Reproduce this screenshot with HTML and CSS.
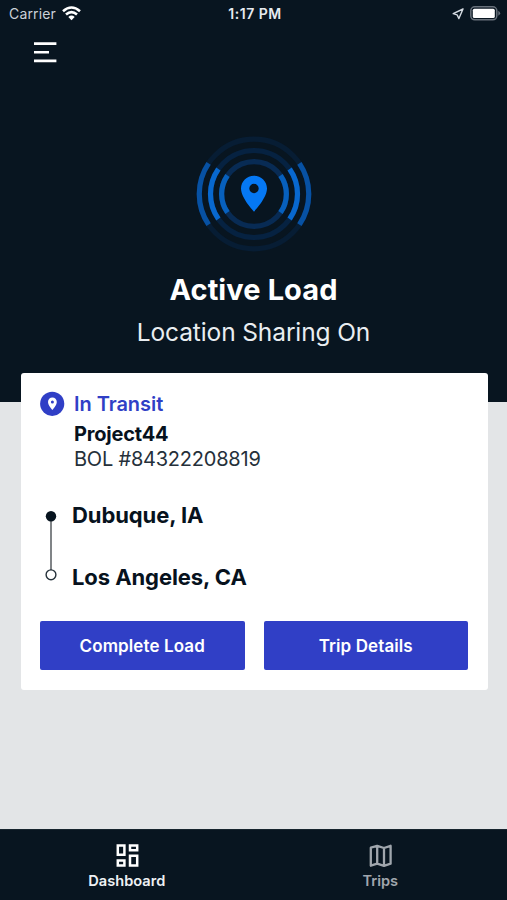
FILE: index.html
```html
<!DOCTYPE html>
<html lang="en">
<head>
<meta charset="utf-8">
<title>Active Load</title>
<link rel="stylesheet" href="styles.css">
</head>
<body>
<div class="app">
  <header class="hero">
    <div class="status">
      <div class="carrier"><span>Carrier</span>
        <svg class="wifi" width="19" height="15" viewBox="0 0 19 15" fill="none" stroke="#fff" stroke-width="2.6"><path d="M1 5.2Q9.5-2.2 18 5.2M4 8.5Q9.5 3.6 15 8.5"/><path d="M6.3 10.9Q9.5 8.2 12.7 10.9L9.5 14.2Z" fill="#fff" stroke="none"/></svg>
      </div>
      <div class="time">1:17 PM</div>
      <div class="indicators">
        <svg width="12" height="12" viewBox="0 0 12 12" fill="none" stroke="#d5dbe2" stroke-width="1.4" stroke-linejoin="round"><path d="M11 1 1.2 5.7 5.1 6.8 6.9 10.6Z"/></svg>
        <svg width="31" height="15" viewBox="0 0 31 15"><rect x=".8" y=".8" width="26" height="13" rx="4" fill="none" stroke="#68717b" stroke-width="1.5"/><rect x="2.8" y="2.7" width="22" height="9.4" rx="1.6" fill="#fff"/><path d="M28.3 4.8Q32 7.3 28.3 9.8Z" fill="#68717b"/></svg>
      </div>
    </div>
    <svg class="menu" width="24" height="22" viewBox="0 0 24 22" fill="none" stroke="#fff" stroke-width="2.6"><path d="M0 2.6H22.4M0 11.2H15M0 19.9H22.4"/></svg>
    <svg class="radar" width="120" height="120" viewBox="-60 -60 120 120" fill="none" stroke-width="5.2">
      <g stroke="#062241"><circle r="54.8" stroke="#071d34"/><circle r="43.5"/><circle r="32.4" stroke="#082b54"/></g>
      <path stroke="#0751a3" d="M-45.4-30.6A54.8 54.8 0 0 0-45.4 30.6M45.4-30.6A54.8 54.8 0 0 1 45.4 30.6"/>
      <path stroke="#0868cf" d="M-35.6-25A43.5 43.5 0 0 0-35.6 25M35.6-25A43.5 43.5 0 0 1 35.6 25"/>
      <path stroke="#0760bd" d="M-26.5-18.6A32.4 32.4 0 0 0-26.5 18.6M26.5-18.6A32.4 32.4 0 0 1 26.5 18.6"/>
      <path fill="#0578f4" fill-rule="evenodd" d="M0-18.3C-7.3-18.3-13-12.6-13-5.4C-13 4.2 0 17.7 0 17.7S13 4.2 13-5.4C13-12.6 7.3-18.3 0-18.3ZM0-10.2A4.7 4.7 0 1 1 0-.8A4.7 4.7 0 1 1 0-10.2Z"/>
    </svg>
    <h1>Active Load</h1>
    <p class="sharing">Location Sharing On</p>
  </header>
  <main>
    <section class="card">
      <div class="load">
        <svg width="25" height="25" viewBox="0 0 25 25"><circle cx="12.2" cy="12.8" r="12.1" fill="#303fc6"/><path fill="#fff" fill-rule="evenodd" d="M12.4 6.6C9.9 6.6 8 8.5 8 11C8 14.3 12.4 18.9 12.4 18.9S16.8 14.3 16.8 11C16.8 8.5 14.9 6.6 12.4 6.6ZM12.4 9.4A1.5 1.5 0 1 1 12.4 12.4A1.5 1.5 0 1 1 12.4 9.4Z"/></svg>
        <div>
          <div class="state">In Transit</div>
          <div class="company">Project44</div>
          <div class="bol">BOL #84322208819</div>
        </div>
      </div>
      <div class="route">
        <svg width="12" height="72" viewBox="0 0 12 72"><path d="M6 6V61" stroke="#73777a" stroke-width="1.8"/><circle cx="6" cy="6.2" r="5.2" fill="#07141f"/><circle cx="6" cy="64.8" r="4.9" fill="#fff" stroke="#26323b" stroke-width="1.4"/></svg>
        <div class="stops"><div class="origin">Dubuque, IA</div><div class="destination">Los Angeles, CA</div></div>
      </div>
      <div class="actions"><button class="complete">Complete Load</button><button class="details">Trip Details</button></div>
    </section>
  </main>
  <nav>
    <a class="tab active"><svg width="24" height="24" viewBox="0 0 24 24" fill="none" stroke="#fff" stroke-width="2.5"><path d="M2.8 1.6H9.4V10.8H2.8ZM15 1.6H22.2V6.2H15ZM2.8 16.4H9.4V21.4H2.8ZM15 11.8H22.2V21.4H15Z"/></svg><span>Dashboard</span></a>
    <a class="tab trips"><svg width="24" height="24" viewBox="0 0 24 24" fill="none" stroke="#a0a6ad" stroke-width="2.3" stroke-linejoin="round"><path d="M2.8 3.7 9.2 1.8 16 4 22.6 1.8V19.7L16 21.8 9.2 19.6 2.8 21.7ZM9.2 1.8V19.6M16 4V21.8"/></svg><span>Trips</span></a>
  </nav>
</div>
</body>
</html>
```
FILE: styles.css
```css
* { box-sizing: border-box; }
body { margin: 0; font-family: Inter, "Liberation Sans", sans-serif; color: #07121d; background: #e3e5e7; }
svg { display: block; flex: none; }
.app { height: 900px; display: flex; flex-direction: column; overflow: hidden; }
.hero { height: 402px; flex: none; background: #081520; color: #fff; display: flex; flex-direction: column; align-items: center; }
.status { width: 100%; height: 28px; padding: 0 6px 0 9px; display: grid; grid-template-columns: 1fr auto 1fr; align-items: center; font-size: 14px; line-height: 28px; color: #e6eaf0; }
.carrier, .indicators { display: flex; align-items: center; }
.carrier { gap: 6px; color: #cbd1d8; letter-spacing: .15px; }
.wifi { margin-top: -2px; }
.time { font-weight: 600; letter-spacing: .5px; }
.indicators { justify-content: flex-end; gap: 6px; }
.indicators svg { margin-top: -1px; }
.menu { align-self: flex-start; margin: 13px 0 0 34px; }
.radar { margin-top: 71px; }
h1 { margin: 17px 0 0; font-size: 29px; line-height: 37px; font-weight: 700; letter-spacing: .1px; }
.sharing { margin: 8px 0 0; font-size: 24.5px; line-height: 32px; font-weight: 400; letter-spacing: -.12px; color: #e9edf1; }
main { flex: 1; padding: 0 19.5px 0 20.5px; }
.card { height: 317px; margin-top: -29.5px; padding: 18px 19.5px 0; border-radius: 3px; background: #fff; display: flex; flex-direction: column; }
.load { display: flex; gap: 9px; font-size: 20px; }
.state { line-height: 27px; font-weight: 600; color: #303fc6; letter-spacing: -.05px; }
.company { margin-top: 3px; line-height: 26px; font-weight: 700; letter-spacing: -.2px; }
.bol { line-height: 24px; color: #25303a; letter-spacing: -.22px; }
.route { display: flex; gap: 15px; margin: 39px 0 0 5px; }
.stops { margin-top: -10px; font-size: 22px; line-height: 30px; font-weight: 700; letter-spacing: -.08px; display: flex; flex-direction: column; gap: 32px; }
.actions { display: grid; grid-template-columns: 1fr 1fr; gap: 19px; margin-top: auto; padding-bottom: 19.5px; }
button { height: 49px; border: 0; border-radius: 2px; background: #303fc6; color: #fff; font: 600 17px/50px Inter, sans-serif; letter-spacing: .1px; padding: 0; }
nav { height: 71px; background: #081520; display: grid; grid-template-columns: 1fr 1fr; border-top: 1px solid #17242e; }
.tab { display: flex; flex-direction: column; align-items: center; padding-top: 14px; font-size: 14.6px; line-height: 20px; font-weight: 600; color: #a0a6ad; gap: 3px; }
.active { color: #eef1f4; }
```
